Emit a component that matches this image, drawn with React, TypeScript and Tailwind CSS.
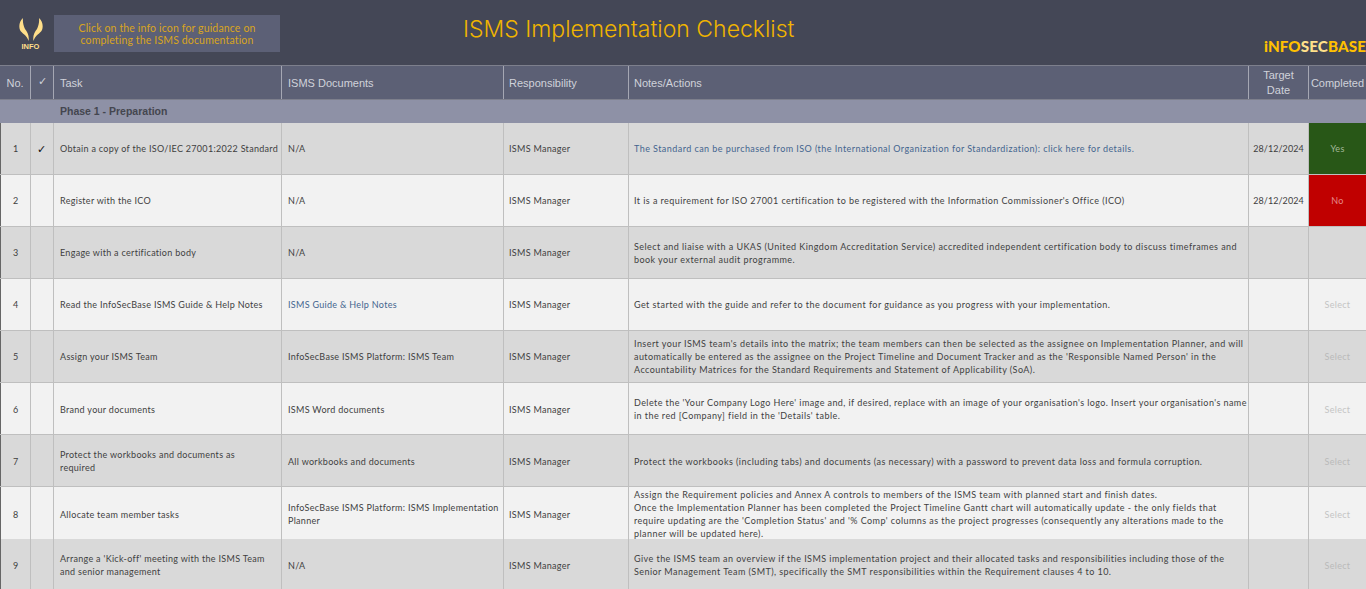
const F = "font-['Lato','Liberation_Sans',sans-serif]";
const rows: { n: number; check?: boolean; task: React.ReactNode; doc: React.ReactNode; note: React.ReactNode; date?: string; status?: string }[] = [
  { n: 1, check: true, task: "Obtain a copy of the ISO/IEC 27001:2022 Standard", doc: "N/A", note: <span className="text-[#44658f]">The Standard can be purchased from ISO (the International Organization for Standardization): click here for details.</span>, date: "28/12/2024", status: "Yes" },
  { n: 2, task: "Register with the ICO", doc: "N/A", note: "It is a requirement for ISO 27001 certification to be registered with the Information Commissioner's Office (ICO)", date: "28/12/2024", status: "No" },
  { n: 3, task: "Engage with a certification body", doc: "N/A", note: "Select and liaise with a UKAS (United Kingdom Accreditation Service) accredited independent certification body to discuss timeframes and book your external audit programme." },
  { n: 4, task: "Read the InfoSecBase ISMS Guide & Help Notes", doc: <span className="text-[#44658f]">ISMS Guide & Help Notes</span>, note: "Get started with the guide and refer to the document for guidance as you progress with your implementation.", status: "Select" },
  { n: 5, task: "Assign your ISMS Team", doc: "InfoSecBase ISMS Platform: ISMS Team", note: "Insert your ISMS team's details into the matrix; the team members can then be selected as the assignee on Implementation Planner, and will automatically be entered as the assignee on the Project Timeline and Document Tracker and as the 'Responsible Named Person' in the Accountability Matrices for the Standard Requirements and Statement of Applicability (SoA).", status: "Select" },
  { n: 6, task: "Brand your documents", doc: "ISMS Word documents", note: <><span className="whitespace-nowrap tracking-[0.42px]">Delete the 'Your Company Logo Here' image and, if desired, replace with an image of your organisation's logo. Insert your organisation's name</span><br />in the red [Company] field in the 'Details' table.</>, status: "Select" },
  { n: 7, task: <>Protect the workbooks and documents as<br />required</>, doc: "All workbooks and documents", note: "Protect the workbooks (including tabs) and documents (as necessary) with a password to prevent data loss and formula corruption.", status: "Select" },
  { n: 8, task: "Allocate team member tasks", doc: "InfoSecBase ISMS Platform: ISMS Implementation Planner", note: <>Assign the Requirement policies and Annex A controls to members of the ISMS team with planned start and finish dates.<br />Once the Implementation Planner has been completed the Project Timeline Gantt chart will automatically update - the only fields that require updating are the 'Completion Status' and '% Comp' columns as the project progresses (consequently any alterations made to the planner will be updated here).</>, status: "Select" },
  { n: 9, task: "Arrange a 'Kick-off' meeting with the ISMS Team and senior management", doc: "N/A", note: "Give the ISMS team an overview if the ISMS implementation project and their allocated tasks and responsibilities including those of the Senior Management Team (SMT), specifically the SMT responsibilities within the Requirement clauses 4 to 10.", status: "Select" },
];

const gridCols = "grid grid-cols-[31px_23px_228px_222px_125px_620px_60px_57px]";

function Head({ children, center, pad = "pl-[6px]" }: { children: React.ReactNode; center?: boolean; pad?: string }) {
  return <div className={`flex items-center pt-[1px] border-r border-[#a5a7b3] last:border-r-0 ${center ? "justify-center text-center" : pad}`}>{children}</div>;
}

function Row({ r }: { r: (typeof rows)[number] }) {
  const shaded = r.n % 2 === 1;
  const bg = shaded ? "bg-[#d9d9d9]" : "bg-[#f2f2f2]";
  const cell = `flex items-center pt-[1px] border-r border-[#bfbfbf] ${bg}`;
  let statusCell = `flex items-center justify-center pt-[1px] ${bg} ${shaded ? "text-[#bababa]" : "text-[#c4c4c4]"}`;
  if (r.status === "Yes") statusCell = "flex items-center justify-center pt-[1px] bg-[#285717] text-[#a3b89a]";
  if (r.status === "No") statusCell = "flex items-center justify-center pt-[1px] bg-[#c00000] text-[#e58a8a]";
  return (
    <div className={`${gridCols} h-[52.1px] border-b border-[#bfbfbf] text-[9px] leading-[13px] text-[#3f3f3f] tracking-[0.3px]`}>
      <div className={`${cell} border-l border-l-[#666666] pl-[12px]`}>{r.n}</div>
      <div className={`${cell} justify-center text-[11px] text-[#111]`}>{r.check ? "✓" : ""}</div>
      <div className={`${cell} pl-[6px] pr-[1px]`}><span>{r.task}</span></div>
      <div className={`${cell} pl-[6px] pr-[1px]`}><span>{r.doc}</span></div>
      <div className={`${cell} pl-[5px]`}>ISMS Manager</div>
      <div className={`${cell} pl-[5px] tracking-[0.44px]`}><span>{r.note}</span></div>
      <div className={`${cell} justify-center tracking-[0.05px]`}>{r.date}</div>
      <div className={statusCell}>{r.status}</div>
    </div>
  );
}

export default function App() {
  return (
    <div className={`h-[589px] w-[1366px] overflow-hidden bg-[#f2f2f2] ${F}`}>
      <div className="flex h-[65px] items-stretch bg-[#444756] relative">
        <div className="flex w-[54px] flex-col items-center pt-[18px]">
          <svg width="24" height="23" viewBox="0 0 24 23" className="ml-[7px]">
            <path d="M4 0C0.5 3 -0.5 8 1 12c1.5 3.5 7 5 8.5 11 1-5-1-9-3.500-12C4.500 8 3.500 4 4 0Z" fill="#ffdf8a" />
            <path d="M20 0c3.500 3 4.500 8 3 12-1.500 3.500-7 5-8.500 11-1-5 1-9 3.500-12C19.500 8 20.500 4 20 0Z" fill="#ffdf8a" />
          </svg>
          <span className="ml-[7px] mt-[2px] text-[7.5px] font-bold leading-[8px] text-[#ffdf8a] font-['Liberation_Sans',sans-serif]">INFO</span>
        </div>
        <div className="mt-[15px] flex h-[37px] w-[226px] flex-col items-center justify-center bg-[#5c6076] text-[10.5px] leading-[12px] tracking-[0.15px] text-[#d9a520]">
          <span>Click on the info icon for guidance on</span>
          <span>completing the ISMS documentation</span>
        </div>
        <h1 className="ml-[183px] mt-[14px] font-['Inter',sans-serif] text-[23px] font-light leading-[30px] tracking-[0px] text-[#f0b400]">ISMS Implementation Checklist</h1>
        <div className="absolute bottom-[11px] right-0 text-[15.2px] font-black leading-[16px] tracking-[0.1px]">
          <span className="text-[#ffc000]">iNFO</span><span className="text-[#ffe08a]">SEC</span><span className="text-[#ffc000]">BASE</span>
        </div>
      </div>
      <div className={`${gridCols} h-[35px] border-t border-[#7d7f8c] border-b bg-[#5c6075] text-[11px] leading-[15px] text-[#d0d2da] font-['Liberation_Sans',sans-serif]`}>
        <Head center>No.</Head>
        <Head center><span className="-mt-[3px]">✓</span></Head>
        <Head>Task</Head>
        <Head>ISMS Documents</Head>
        <Head pad="pl-[5px]">Responsibility</Head>
        <Head pad="pl-[5px]">Notes/Actions</Head>
        <Head center>Target<br />Date</Head>
        <Head center>Completed</Head>
      </div>
      <div className="flex h-[22.5px] items-center bg-[#8e91a6] pl-[60px] pt-[2px] font-['Liberation_Sans',sans-serif] text-[10.5px] font-bold text-[#44464f]">Phase 1 - Preparation</div>
      {rows.map((r) => <Row key={r.n} r={r} />)}
    </div>
  );
}
